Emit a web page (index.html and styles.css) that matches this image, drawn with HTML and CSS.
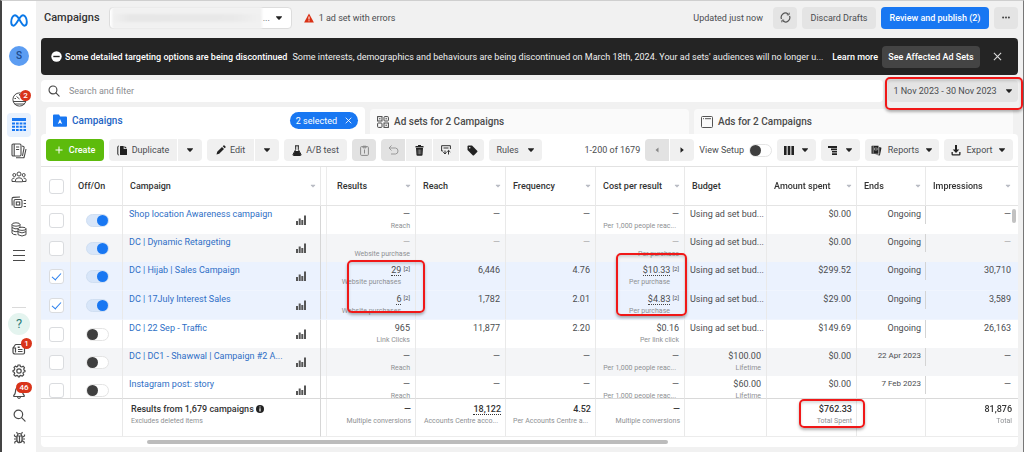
FILE: index.html
```html
<!DOCTYPE html>
<html lang="en">
<head>
<meta charset="utf-8">
<title>Campaigns</title>
<link rel="stylesheet" href="styles.css">
</head>
<body>
<svg class="sprite" aria-hidden="true">
  <symbol id="caret" viewBox="-.7 -.7 9.400 9.400"><path d="M.8 2h6.400q.6.200.2.700L4.500 6q-.5.400-1 0L.6 2.700Q.2 2.200.8 2z" fill="currentColor"/></symbol>
  <symbol id="chart" viewBox="0 0 10 10"><path d="M0 6h2v4H0zM2.700 3.500h2V10h-2zM5.300 5h2v5h-2zM8 .5h2V10H8z" fill="currentColor"/></symbol>
  <symbol id="search" viewBox="0 0 14 14"><g fill="none" stroke="currentColor" stroke-width="1.300" stroke-linecap="round"><circle cx="5.800" cy="5.800" r="4.600"/><path d="M9.300 9.300l3.700 3.700"/></g></symbol>
  <symbol id="close" viewBox="0 0 10 10"><path d="M1 1l8 8M9 1L1 9" stroke="currentColor" stroke-width="1.200" fill="none"/></symbol>
</svg>
<div class="app">
  <nav class="rail" aria-label="Main">
    <a href="#" class="rail-item logo" aria-label="Home"><svg width="18" height="13" viewBox="0 0 18 13"><path d="M9 4.800C7.600 2.600 6.400 1.200 4.900 1.200 2.700 1.200 1.200 4.800 1.200 8.100c0 2.200.9 3.600 2.400 3.600C5.200 11.700 6.400 9.500 9 5c1.600-2.600 2.700-3.800 4.100-3.800 2.200 0 3.700 3.600 3.700 6.900 0 2.200-.9 3.600-2.400 3.600-1.600 0-2.700-1.700-5.400-6.900z" fill="none" stroke="#0a78e8" stroke-width="1.900" stroke-linejoin="round"/></svg></a>
    <a href="#" class="avatar" aria-label="Account">S</a>
    <a href="#" class="rail-item" aria-label="Overview"><svg width="15" height="15" viewBox="0 0 15 15" fill="none" stroke="currentColor"><circle cx="7.500" cy="7.500" r="6.600"/><path d="M1 9.500h13M2.500 12h10" stroke-width="1"/><path d="M7.500 7l-3-2.500M7.500 2v1.500M2.500 6.500H4"/></svg><span class="badge">2</span></a>
    <a href="#" class="rail-item active" aria-label="Campaigns"><svg width="16" height="14" viewBox="0 0 16 14" fill="#1877f2"><path d="M1 0h14v3H1zM1 4.500h3v2H1zM5 4.500h2.700v2H5zM8.700 4.500h2.700v2H8.700zM12.400 4.500H15v2h-2.600zM1 7.700h3v2H1zM5 7.700h2.700v2H5zM8.700 7.700h2.700v2H8.700zM12.400 7.700H15v2h-2.600zM1 11h3v2H1zM5 11h2.700v2H5zM8.700 11h2.700v2H8.700zM12.400 11H15v2h-2.600z"/></svg></a>
    <a href="#" class="rail-item" aria-label="Reports"><svg width="16" height="16" viewBox="0 0 16 16" fill="none" stroke="currentColor" stroke-width="1.100"><rect x="1" y="1" width="9" height="12" rx="1.200"/><path d="M3.200 1v12M5 4h3.200M5 6.500h3.200M11 3l1.500.4q.8.3.6 1.200L11.500 13M5 14.800h7.200q.8 0 1-.8L15 6"/></svg></a>
    <a href="#" class="rail-item" aria-label="Audiences"><svg width="16" height="12" viewBox="0 0 16 12" fill="none" stroke="currentColor"><circle cx="8" cy="3" r="2"/><circle cx="3.300" cy="4" r="1.500"/><circle cx="12.700" cy="4" r="1.500"/><path d="M4.500 10.800V9q.3-2.200 3.500-2.200T11.500 9v1.800zM4.300 10.500H1V8.500Q1.300 7 3.500 7M11.700 10.500H15V8.500Q14.700 7 12.500 7"/></svg></a>
    <a href="#" class="rail-item" aria-label="Ad settings"><svg width="16" height="14" viewBox="0 0 16 14" fill="none" stroke="currentColor" stroke-width="1.100"><rect x="3" y="3.500" width="8" height="8" rx="1.500"/><rect x="5.300" y="6" width="3.400" height="3"/><path d="M1.200 9.500L1 3q0-1.500 1.500-1.600L9 1M12.700 4.500H15M12.700 7.500H15M12.700 10.500H15"/></svg></a>
    <a href="#" class="rail-item" aria-label="Billing"><svg width="16" height="15" viewBox="0 0 16 15" fill="none" stroke="currentColor"><ellipse cx="5" cy="2.500" rx="4" ry="1.700"/><path d="M1 2.500v8.700q1 1.600 4.500 1.600M9 2.500V5M1 5.500q3 2 6 1.200M1 8.400q3 2 6 1.200"/><ellipse cx="11" cy="6.800" rx="4" ry="1.600"/><path d="M7 6.800v5.900q4 2.600 8 0V6.800M7 9.700q4 2.400 8 0"/></svg></a>
    <a href="#" class="rail-item" aria-label="All tools"><svg width="12" height="11" viewBox="0 0 12 11" stroke="currentColor"><path d="M0 .5h12M0 5.500h12M0 10.500h12"/></svg></a>
    <div class="rail-bottom">
      <a href="#" class="help" aria-label="Help">?</a>
      <a href="#" class="rail-item small" aria-label="News"><svg width="14" height="12" viewBox="0 0 14 12" fill="none" stroke="currentColor" stroke-width="1.200"><path d="M3.500 1.500h9v8.300q0 1.200-1.300 1.200H3.200Q1 11 1 9V5h2.500v4.500M1 5l2.500-3.500M6 8.500h4.500M6 6.500h4.500"/><path d="M5.700 3.500h2v1.500h-2z" fill="currentColor" stroke="none"/></svg><span class="badge">1</span></a>
      <a href="#" class="rail-item small" aria-label="Settings"><svg width="14" height="14" viewBox="0 0 14 14" fill="none" stroke="currentColor" stroke-width="1.200"><circle cx="7" cy="7" r="2.200"/><path d="M6 1h2l.4 1.500 1.300.5 1.400-.8 1.400 1.400-.8 1.400.5 1.300L13 6.500v1.200l-1.600.5-.4 1.200.7 1.400-1.400 1.400-1.400-.8-1.200.5L7.500 13h-1l-.5-1.100-1.300-.5-1.400.8-1.400-1.400.8-1.400-.5-1.200L1 7.700V6.500l1.300-.4.500-1.300L2 3.500l1.400-1.400 1.300.8 1-.5z" stroke-linejoin="round"/></svg></a>
      <a href="#" class="rail-item small" aria-label="Notifications"><svg width="14" height="14" viewBox="0 0 14 14" fill="none" stroke="currentColor" stroke-width="1.200"><path d="M7 1.200Q3.500 1.500 3.500 5.500q0 2-1.700 4-.4 1 .6 1h9.200q1 0 .6-1-1.700-2-1.700-4Q10.500 1.500 7 1.200zM5.500 11q1.500 3 3 0"/></svg><span class="badge wide">46</span></a>
      <a href="#" class="rail-item small" aria-label="Search"><svg width="13" height="13"><use href="#search"/></svg></a>
      <a href="#" class="rail-item small" aria-label="Report a bug"><svg width="13" height="13" viewBox="0 0 13 13" fill="none" stroke="currentColor" stroke-width="1.200"><path d="M4 5h5v4q0 2.700-2.500 2.700T4 9zM4.300 5Q4.500 2.500 6.500 2.500T8.700 5M4.500 2.600L3.500 1.200M8.500 2.600l1-1.400M4 6.500L1.500 5V3.500M9 6.500L11.500 5V3.500M1 8h3M9 8h3M4 9.500L1.800 11v1.500M9 9.500l2.200 1.500v1.500M6.500 5.500v6"/></svg></a>
    </div>
  </nav>

  <main class="main">
    <header class="top">
      <h1>Campaigns</h1>
      <div class="account">
        <select aria-label="Ad account"><option>...</option></select>
        <span class="account-mask"></span>
        <svg class="account-caret" width="8" height="8"><use href="#caret"/></svg>
      </div>
      <span class="warning"><svg width="10" height="10" viewBox="0 0 10 10"><path d="M5 .5L9.900 9.400H.1z" fill="#d93014"/><path d="M5 3.500v3M5 7.300v1" stroke="#fff"/></svg>1 ad set with errors</span>
      <span class="updated">Updated just now</span>
      <button class="btn top-btn icon-btn" aria-label="Refresh"><svg width="11" height="11" viewBox="0 0 11 11" fill="none" stroke="#555" stroke-width="1.200"><path d="M1.500 7A4.300 4.300 0 0 1 8 1.900M9.500 4A4.300 4.300 0 0 1 3 9.100"/><path d="M6.800 2.800l2.200.1.200-2.200M4.200 8.200L2 8.100l-.2 2.200" stroke-width="1"/></svg></button>
      <button class="btn top-btn discard">Discard Drafts</button>
      <button class="btn top-btn publish">Review and publish (2)</button>
      <button class="btn top-btn icon-btn" aria-label="More"><svg width="8" height="3" viewBox="0 0 8 3" fill="#444"><circle cx="1.100" cy="1.500" r="1"/><circle cx="4" cy="1.500" r="1"/><circle cx="6.900" cy="1.500" r="1"/></svg></button>
    </header>

    <section class="notice">
      <svg width="11" height="11" viewBox="0 0 11 11"><circle cx="5.500" cy="5.500" r="5.200" fill="#fff"/><path d="M2.300 5.500h6.400" stroke="#242424" stroke-width="1.400"/></svg>
      <strong>Some detailed targeting options are being discontinued</strong>
      <p>Some interests, demographics and behaviours are being discontinued on March 18th, 2024. Your ad sets' audiences will no longer u...</p>
      <a href="#" class="learn">Learn more</a>
      <button class="affected">See Affected Ad Sets</button>
      <button class="dismiss" aria-label="Close"><svg width="9" height="9"><use href="#close"/></svg></button>
    </section>

    <div class="filter-row">
      <label class="search"><svg width="12" height="12"><use href="#search"/></svg><input type="text" placeholder="Search and filter" aria-label="Search and filter"></label>
      <button class="date">1 Nov 2023 - 30 Nov 2023<svg width="8" height="8"><use href="#caret"/></svg></button>
    </div>

    <div class="tabs">
      <a href="#" class="tab current"><svg width="14" height="13" viewBox="0 0 14 13"><path d="M1 .5h5l1.200 2H13q1 0 1 1V12q0 .8-1 .8H1q-1 0-1-.8V1.500Q0 .5 1 .5z" fill="#1877f2"/><path d="M7 5l2.200 5-2.200-1-2.200 1z" fill="#fff"/></svg>Campaigns<span class="pill">2 selected<svg width="7" height="7"><use href="#close"/></svg></span></a>
      <a href="#" class="tab"><svg width="12" height="12" viewBox="0 0 12 12" fill="none" stroke="#444"><rect x=".6" y=".6" width="4.400" height="4.400"/><rect x="7" y=".6" width="4.400" height="4.400" rx=".8"/><rect x=".6" y="7" width="4.400" height="4.400" rx=".8"/><rect x="7" y="7" width="4.400" height="4.400"/><path d="M2 2.800h1.600M8.400 9.200H10M8.400 2.800H10"/></svg>Ad sets for 2 Campaigns</a>
      <a href="#" class="tab"><svg width="12" height="12" viewBox="0 0 12 12" fill="none" stroke="#555"><rect x=".5" y=".5" width="11" height="11" rx="1"/><path d="M2 2.700h1M4 2.700h6"/></svg>Ads for 2 Campaigns</a>
    </div>

    <section class="panel">
      <div class="toolbar">
        <button class="btn create"><svg width="8" height="8" viewBox="0 0 8 8" stroke="#fff"><path d="M4 .5v7M.5 4h7"/></svg>Create</button>
        <div class="group">
          <button class="btn w-lg"><svg width="11" height="11" viewBox="0 0 11 11"><path d="M3.500 1h3.200v3H10v5.500q0 .5-.5.5h-6q-.5 0-.5-.5v-8q0-.5.5-.5zM7.500.9L10 3.300H7.500z" fill="#222"/><path d="M1.700 1Q.8 1 .8 2v7q0 1 .9 1" fill="none" stroke="#222"/></svg>Duplicate</button>
          <button class="btn w-sm" aria-label="Duplicate options"><svg width="8" height="8"><use href="#caret"/></svg></button>
        </div>
        <div class="group">
          <button class="btn w-md"><svg width="10" height="10" viewBox="0 0 10 10" fill="#222"><path d="M.5 9.500l.7-2.700L6 2l2 2-4.800 4.800zM6.700 1.300l.8-.8q.5-.4 1 0l1 1q.4.500 0 1l-.8.8z"/></svg>Edit</button>
          <button class="btn w-sm" aria-label="Edit options"><svg width="8" height="8"><use href="#caret"/></svg></button>
        </div>
        <button class="btn w-ab"><svg width="10" height="11" viewBox="0 0 10 11"><path d="M3 .8h4M3.700 1v3.500L1 9.500q-.3 1 .7 1h6.600q1 0 .7-1L6.300 4.500V1" fill="none" stroke="#222"/><path d="M3 6h4l2 4H1z" fill="#222"/></svg>A/B test</button>
        <button class="btn w-sm off" aria-label="Paste"><svg width="9" height="11" viewBox="0 0 9 11" fill="none" stroke="#8a8a8a"><rect x=".6" y="1.600" width="7.800" height="8.800" rx="1"/><path d="M3 1.200h3v1.600H3zM4.500 4.500v4"/></svg></button>
        <div class="group">
          <button class="btn w-sm off" aria-label="Undo"><svg width="11" height="10" viewBox="0 0 11 10" fill="none" stroke="#999"><path d="M3.500.5L1 3l2.500 2.500M1 3h6.500q2.500.3 2.500 3T7.500 9H3"/></svg></button>
          <button class="btn w-md-icon" aria-label="Delete"><svg width="9" height="11" viewBox="0 0 9 11" fill="#222"><path d="M3 0h3v1h2.500v1.500H.5V1H3zM1 3h7l-.5 7q-.1.800-1 .8h-4q-.9 0-1-.8z"/><path d="M3.200 4.500v4.800M4.500 4.500v4.800M5.800 4.500v4.800" stroke="#aaa" stroke-width=".6"/></svg></button>
          <button class="btn w-md-icon" aria-label="Swap"><svg width="10" height="10" viewBox="0 0 10 10" fill="none" stroke="#333"><path d="M2.200 6H.6V.7h8.800V4M2.500 3h5M4 9V5.500M2.300 7.200L4 9l1.500-1.800M7.500 9.500V5.500M6 6.800l1.500-1.500L9.300 7"/></svg></button>
          <button class="btn w-sm" aria-label="Tag"><svg width="11" height="11" viewBox="0 0 11 11"><path d="M.5 1.500q0-1 1-1H5l5.200 5.200q.6.700 0 1.400L7 10.300q-.7.600-1.300 0L.5 5z" fill="#222"/><circle cx="2.700" cy="2.700" r=".8" fill="#f0f0f0"/></svg></button>
        </div>
        <button class="btn w-rules">Rules<svg width="8" height="8"><use href="#caret"/></svg></button>
        <span class="range">1-200 of 1679</span>
        <div class="group">
          <button class="btn w-sm off" aria-label="Previous page"><svg width="6" height="6" viewBox="0 0 6 6"><path d="M4.500 .5v5L1.500 3z" fill="#888"/></svg></button>
          <button class="btn w-sm" aria-label="Next page"><svg width="6" height="6" viewBox="0 0 6 6"><path d="M1.500 .3v5.400L4.800 3z" fill="#222"/></svg></button>
        </div>
        <label class="setup">View Setup<input type="checkbox" class="toggle"></label>
        <button class="btn w-view" aria-label="Columns"><svg width="10" height="9" viewBox="0 0 10 9" fill="#222"><path d="M0 0h2.600v9H0zM3.700 0h2.600v9H3.700zM7.400 0H10v9H7.400z"/></svg><svg width="8" height="8"><use href="#caret"/></svg></button>
        <button class="btn w-view" aria-label="Breakdown"><svg width="10" height="9" viewBox="0 0 10 9" fill="#222"><path d="M0 0h9v2H0zM3 2.600h6v1.600H3zM4 4.900h5v1.600H4zM4 7.200h5V9H4z"/></svg><svg width="8" height="8"><use href="#caret"/></svg></button>
        <button class="btn w-rep"><svg width="11" height="11" viewBox="0 0 11 11"><path d="M1 .7h6.500v8H1q-.5 0-.5-.5v-7q0-.5.5-.5zM8.200 2l1.800.5q.5.200.4.700L9 10q-.1.500-.7.400L4 9.400h4.200z" fill="#222"/><path d="M2.200 1v7.500M3.500 3h2.700v2H3.500z" stroke="#ccc" stroke-width=".6" fill="none"/></svg>Reports<svg width="8" height="8"><use href="#caret"/></svg></button>
        <button class="btn w-exp"><svg width="10" height="11" viewBox="0 0 10 11" fill="#222"><path d="M4 0h2v4.500h2.300L5 8 1.700 4.500H4zM.5 7v2.200q0 1.300 1.300 1.300h6.400q1.300 0 1.300-1.300V7l-1.300 0v2.200H1.800V7z"/></svg>Export<svg width="8" height="8"><use href="#caret"/></svg></button>
      </div>

      <div class="table-wrap">
        <table>
          <colgroup><col class="c-check"><col class="c-toggle"><col><col class="c-results"><col class="c-num"><col class="c-num"><col class="c-cost"><col class="c-budget"><col class="c-num"><col class="c-ends"><col class="c-last"></colgroup>
          <thead><tr>
            <th class="pick"><input type="checkbox" class="box" aria-label="Select all"></th>
            <th>Off/On</th>
            <th class="name"><div class="head">Campaign<svg width="6" height="6"><use href="#caret"/></svg></div></th>
            <th class="results"><div class="head">Results<svg width="6" height="6"><use href="#caret"/></svg></div></th>
            <th><div class="head">Reach<svg width="6" height="6"><use href="#caret"/></svg></div></th>
            <th><div class="head">Frequency<svg width="6" height="6"><use href="#caret"/></svg></div></th>
            <th><div class="head">Cost per result<svg width="6" height="6"><use href="#caret"/></svg></div></th>
            <th>Budget</th>
            <th><div class="head">Amount spent<svg width="6" height="6"><use href="#caret"/></svg></div></th>
            <th><div class="head">Ends<svg width="6" height="6"><use href="#caret"/></svg></div></th>
            <th><div class="head">Impressions<svg width="6" height="6"><use href="#caret"/></svg></div></th>
          </tr></thead>
          <tbody>
            <tr>
              <td class="pick"><input type="checkbox" class="box" aria-label="Select Shop location Awareness campaign"></td>
              <td class="switch"><input type="checkbox" class="toggle" checked aria-label="On"></td>
              <td class="name"><div class="cell-name"><a href="#">Shop location Awareness campaign</a><svg width="10" height="10"><use href="#chart"/></svg></div></td>
              <td class="results">—<small>Reach</small></td><td>—</td><td>—</td><td>—<small class="cut">Per 1,000 people reac...</small></td>
              <td class="left">Using ad set bud...</td><td>$0.00</td><td class="ends">Ongoing</td><td>—</td>
            </tr>
            <tr class="alt faint">
              <td class="pick"><input type="checkbox" class="box" aria-label="Select DC | Dynamic Retargeting"></td>
              <td class="switch"><input type="checkbox" class="toggle" checked aria-label="On"></td>
              <td class="name"><div class="cell-name"><a href="#">DC | Dynamic Retargeting</a><svg width="10" height="10"><use href="#chart"/></svg></div></td>
              <td class="results"><i>—</i><small>Website purchase</small></td><td><i>—</i></td><td><i>—</i></td><td><i>—</i><small>Per purchase</small></td>
              <td class="left">Using ad set bud...</td><td>$0.00</td><td class="ends">Ongoing</td><td><i>—</i></td>
            </tr>
            <tr class="sel">
              <td class="pick"><input type="checkbox" class="box" checked aria-label="Select DC | Hijab | Sales Campaign"></td>
              <td class="switch"><input type="checkbox" class="toggle" checked aria-label="On"></td>
              <td class="name"><div class="cell-name"><a href="#">DC | Hijab | Sales Campaign</a><svg width="10" height="10"><use href="#chart"/></svg></div></td>
              <td class="results"><u>29</u><sup>[2]</sup><small class="inset">Website purchases</small></td><td>6,446</td><td>4.76</td><td><u>$10.33</u><sup>[2]</sup><small class="inset">Per purchase</small></td>
              <td class="left">Using ad set bud...</td><td>$299.52</td><td class="ends">Ongoing</td><td>30,710</td>
            </tr>
            <tr class="sel">
              <td class="pick"><input type="checkbox" class="box" checked aria-label="Select DC | 17July Interest Sales"></td>
              <td class="switch"><input type="checkbox" class="toggle" checked aria-label="On"></td>
              <td class="name"><div class="cell-name"><a href="#">DC | 17July Interest Sales</a><svg width="10" height="10"><use href="#chart"/></svg></div></td>
              <td class="results"><u>6</u><sup>[2]</sup><small class="inset">Website purchases</small></td><td>1,782</td><td>2.01</td><td><u>$4.83</u><sup>[2]</sup><small class="inset">Per purchase</small></td>
              <td class="left">Using ad set bud...</td><td>$29.00</td><td class="ends">Ongoing</td><td>3,589</td>
            </tr>
            <tr>
              <td class="pick"><input type="checkbox" class="box" aria-label="Select DC | 22 Sep - Traffic"></td>
              <td class="switch"><input type="checkbox" class="toggle" aria-label="Off"></td>
              <td class="name"><div class="cell-name"><a href="#">DC | 22 Sep - Traffic</a><svg width="10" height="10"><use href="#chart"/></svg></div></td>
              <td class="results">965<small>Link Clicks</small></td><td>11,877</td><td>2.20</td><td>$0.16<small>Per link click</small></td>
              <td class="left">Using ad set bud...</td><td>$149.69</td><td class="ends">Ongoing</td><td>26,163</td>
            </tr>
            <tr class="alt">
              <td class="pick"><input type="checkbox" class="box" aria-label="Select DC | DC1 - Shawwal"></td>
              <td class="switch"><input type="checkbox" class="toggle" aria-label="Off"></td>
              <td class="name"><div class="cell-name"><a href="#">DC | DC1 - Shawwal | Campaign #2 A...</a><svg width="10" height="10"><use href="#chart"/></svg></div></td>
              <td class="results">—<small>Reach</small></td><td>—</td><td>—</td><td>—<small class="cut">Per 1,000 people reac...</small></td>
              <td>$100.00<small>Lifetime</small></td><td>$0.00</td><td class="ends day">22 Apr 2023</td><td>—</td>
            </tr>
            <tr>
              <td class="pick"><input type="checkbox" class="box" aria-label="Select Instagram post: story"></td>
              <td class="switch"><input type="checkbox" class="toggle" aria-label="Off"></td>
              <td class="name"><div class="cell-name"><a href="#">Instagram post: story</a><svg width="10" height="10"><use href="#chart"/></svg></div></td>
              <td class="results">—<small>Reach</small></td><td>—</td><td>—</td><td>—<small class="cut">Per 1,000 people reac...</small></td>
              <td>$60.00<small>Lifetime</small></td><td>$0.00</td><td class="ends day">7 Feb 2023</td><td>—</td>
            </tr>
          </tbody>
          <tfoot><tr>
            <td colspan="2"></td>
            <td class="name total"><b>Results from 1,679 campaigns <svg width="8" height="8" viewBox="0 0 8 8"><circle cx="4" cy="4" r="4" fill="#222"/><path d="M4 1.400v1.200M4 3.300v3.300" stroke="#fff" stroke-width="1.200"/></svg></b><small>Excludes deleted items</small></td>
            <td class="results"><b>—</b><small>Multiple conversions</small></td>
            <td><b class="dotted">18,122</b><small class="cut">Accounts Centre acco...</small></td>
            <td><b>4.52</b><small class="cut">Per Accounts Centre a...</small></td>
            <td><b>—</b><small>Multiple conversions</small></td>
            <td></td>
            <td><b>$762.33</b><small>Total Spent</small></td>
            <td></td>
            <td><b>81,876</b><small>Total</small></td>
          </tr></tfoot>
        </table>
        <span class="vbar"></span>
      </div>
      <div class="hbar"><span></span></div>
    </section>
  </main>
  <span class="mark mark-date"></span>
  <span class="mark mark-results"></span>
  <span class="mark mark-cost"></span>
  <span class="mark mark-spent"></span>
</div>
</body>
</html>
```
FILE: styles.css
```css
* { box-sizing: border-box; }
body { margin: 0; font-family: Roboto, "Liberation Sans", sans-serif; font-size: 9px; line-height: 12px; color: #4b4d50; background: #f1f1f1; }
a { color: inherit; text-decoration: none; }
button, input, select { font: inherit; color: inherit; margin: 0; }
button { border: 0; padding: 0; cursor: pointer; white-space: nowrap; display: flex; align-items: center; justify-content: center; }
svg { flex: none; display: block; }
.sprite { position: absolute; width: 0; height: 0; }

.app { position: relative; display: flex; height: 100vh; min-height: 452px; border: solid #cfcfcf; border-width: 1px 1px 0 2px; border-left-color: #444; border-right-color: #777; }

/* left rail */
.rail { width: 34px; flex: none; background: #fff; display: flex; flex-direction: column; align-items: center; padding: 6px 0 4px; color: #4a4a4a; }
.rail-item { position: relative; width: 24px; height: 26px; display: flex; align-items: center; justify-content: center; flex: none; }
.rail-item.small { height: 22px; }
.rail-item.active { background: #e7f1fe; border-radius: 4px; height: 24px; margin: 1px 0; }
.avatar { width: 20px; height: 20px; margin: 13px 0 20px; border-radius: 50%; background: #5c9df2; color: #1d4a8c; font-size: 10px; font-weight: 500; display: flex; align-items: center; justify-content: center; flex: none; }
.badge { position: absolute; top: 4px; right: 0; min-width: 11px; height: 11px; border-radius: 6px; background: #d9341a; color: #fff; font-size: 8px; font-weight: 500; line-height: 11px; text-align: center; }
.small .badge { top: 0; right: -1px; }
.small .badge.wide { width: 16px; }
.rail-bottom { margin-top: auto; display: flex; flex-direction: column; align-items: center; }
.rail-bottom::before { content: ""; width: 14px; height: 1px; background: #dadada; margin-bottom: 5px; }
.help { width: 22px; height: 22px; margin-bottom: 3px; border-radius: 50%; background: #e4f4ef; color: #2f7d78; font-size: 13px; display: flex; align-items: center; justify-content: center; }

.main { flex: 1; min-width: 0; display: flex; flex-direction: column; padding: 5px 5px 5px 5px; }

/* header */
.top { display: flex; align-items: center; height: 23px; margin-bottom: 9px; gap: 5px; }
.top h1 { margin: 0 4px 0 3px; font-size: 11px; font-weight: 500; color: #333; }
.account { position: relative; width: 183px; height: 22px; margin-right: 7px; }
.account select { width: 100%; height: 100%; appearance: none; border: 1px solid #ddd; border-radius: 4px; background: #fff; padding: 0 20px 0 153px; }
.account-mask { position: absolute; inset: 0 30px 0 3px; background: linear-gradient(90deg, #f1f1f1 0, #e7e7e7 12%, #e9e9e9 80%, #f1f1f1) center / 100% 8px no-repeat #f1f1f1; filter: blur(1px); }
.account-caret { position: absolute; right: 9px; top: 7px; color: #222; }
.warning { display: flex; align-items: center; gap: 5px; }
.updated { margin-left: auto; margin-right: 5px; }
.btn { height: 22px; background: #f0f0f0; border-radius: 4px; gap: 4px; color: #4b4d50; }
.btn use { color: #222; }
.top-btn { background: #e4e4e4; }
.icon-btn { width: 24px; }
.discard { width: 74px; }
.publish { width: 108px; background: #1877f2; color: #fff; font-weight: 500; }

/* notice */
.notice { display: flex; align-items: center; height: 37px; flex: none; padding: 0 16px 0 10px; border-radius: 4px; background: #242424; color: #fff; margin-bottom: 5px; }
.notice strong { font-weight: 500; margin: 0 5px 0 3px; white-space: nowrap; }
.notice p { margin: 0; flex: 1; min-width: 0; white-space: nowrap; overflow: hidden; text-overflow: ellipsis; color: #eee; }
.learn { font-weight: 500; margin: 0 4px; white-space: nowrap; }
.affected { width: 98px; height: 22px; background: #444; color: #fff; border-radius: 4px; font-weight: 500; }
.dismiss { margin-left: 13px; background: none; color: #ddd; }

/* filter */
.filter-row { display: flex; gap: 5px; height: 22px; flex: none; margin-bottom: 5px; }
.search { flex: 1; display: flex; align-items: center; gap: 9px; padding-left: 7px; background: #fff; border-radius: 4px; color: #444; }
.search input { border: 0; outline: 0; flex: 1; background: none; padding: 0; }
.search input::placeholder { color: #8b8d91; }
.date { width: 130px; gap: 8px; background: #e4e4e4; border-radius: 4px; }
.date svg { color: #222; }

/* tabs */
.tabs { display: grid; grid-template-columns: repeat(3, 1fr); gap: 5px; padding: 0 5px; height: 27px; flex: none; align-items: end; }
.tab { display: flex; align-items: center; gap: 5px; height: 25px; padding: 0 7px; border-radius: 4px 4px 0 0; background: #fafafa; font-size: 10px; font-weight: 500; color: #4a4a4a; white-space: nowrap; }
.tab.current { height: 27px; background: #fff; color: #2464c4; }
.pill { margin-left: auto; height: 17px; border-radius: 9px; background: #1877f2; color: #fff; font-size: 9px; font-weight: 400; display: flex; align-items: center; gap: 8px; padding: 0 6px; }

/* panel */
.panel { flex: 1; min-height: 0; background: #fff; border-radius: 4px; display: flex; flex-direction: column; }
.toolbar { display: flex; align-items: center; gap: 5px; height: 32px; flex: none; padding: 0 5px; }
.toolbar .btn { flex: none; }
.group { display: flex; gap: 1px; }
.group .btn { border-radius: 0; }
.group .btn:first-child { border-radius: 4px 0 0 4px; }
.group .btn:last-child { border-radius: 0 4px 4px 0; }
.toolbar .create { width: 58px; background: #5dbb0c; color: #fff; font-weight: 500; gap: 6px; }
.w-lg { width: 68px; }
.w-md { width: 47px; }
.w-sm { width: 24px; }
.w-md-icon { width: 26px; }
.w-ab { width: 63px; }
.toolbar .w-rules { width: 53px; gap: 8px; }
.toolbar .w-view { width: 39px; gap: 7px; }
.toolbar .w-rep { width: 74px; gap: 6px; }
.toolbar .w-exp { width: 69px; gap: 6px; }
.toolbar .off { background: #e2e2e2; }
.range { margin-left: auto; white-space: nowrap; }
.setup { display: flex; align-items: center; gap: 5px; white-space: nowrap; }

.toggle { appearance: none; display: block; width: 23px; height: 13px; border: 1px solid #e4e4e4; border-radius: 7px; background: #fff; }
.toggle::before { content: ""; display: block; width: 11px; height: 11px; border-radius: 50%; background: #3f3f3f; }
.toggle:checked { background: #d8e6f9; border-color: #d0dff2; }
.toggle:checked::before { background: #1877f2; margin-left: 10px; }
.box { appearance: none; display: block; width: 15px; height: 15px; border: 1px solid #dadcdf; border-radius: 3px; background: #fff; }
.box:checked::before { content: ""; display: block; width: 8px; height: 4px; margin: 3px 0 0 2px; border: solid #2b80ee; border-width: 0 0 1px 1px; transform: rotate(-48deg); }

/* table */
.table-wrap { position: relative; flex: 1; min-height: 0; overflow: hidden; border-top: 1px solid #e2e2e2; }
table { width: 100%; table-layout: fixed; border-collapse: separate; border-spacing: 0; }
.c-check { width: 30px; }
.c-toggle { width: 52px; }
.c-results { width: 95px; }
.c-num { width: 90px; }
.c-cost { width: 89px; }
.c-budget { width: 82px; }
.c-ends { width: 69px; }
.c-last { width: 92px; }
th, td { padding: 0; border-right: 1px solid #e9e9e9; white-space: nowrap; overflow: hidden; }
th:last-child, td:last-child { border-right: 0; }
thead { position: sticky; top: 0; z-index: 1; background: #fff; }
th { height: 39px; padding: 0 4px 0 7px; border-bottom: 1px solid #e4e4e4; font-weight: 500; text-align: left; color: #333; }
th:last-child { padding-right: 7px; }
.head { display: flex; align-items: center; justify-content: space-between; }
.head svg { color: #b9bcc4; }
.pick, th.pick { padding: 0 0 0 8px; vertical-align: middle; }
td { height: 28px; padding: 2px 5px 0; vertical-align: top; text-align: right; }
td.pick { text-align: left; padding-top: 0; }
td:last-child { padding-right: 7px; }
.alt { background: #f4f5f7; }
.sel { background: #ebf2fe; }
.sel td { height: 29px; border-bottom: 1px solid #f0f5fe; }
.faint i { color: #aaa; }
i { font-style: normal; }
td.switch { padding: 0 0 0 15px; vertical-align: middle; }
td.name { text-align: left; padding-left: 6px; border-right-color: #d6d6d6; }
td.left { text-align: left; }
.cell-name { display: flex; justify-content: space-between; padding-right: 9px; }
.cell-name a { color: #2f6fc6; }
.cell-name svg { color: #555; margin-top: 7px; }
.results { background: linear-gradient(#ececec, #ececec) 5px 0 / 1px 100% no-repeat; }
th.results { padding-left: 16px; }
small { display: block; font-size: 7px; line-height: 12px; color: #8e9093; }
.inset { padding-right: 9px; }
.cut { padding-right: 3px; }
sup { font-size: 6px; line-height: 6px; margin-left: 2px; vertical-align: 2px; }
u { text-decoration: none; border-bottom: 1px dotted #444; }
.dotted { border-bottom: 1px dotted #333; }
.ends { border-right: 0; background: linear-gradient(#d4d4d4, #d4d4d4) right 0 top 0 / 1px 18px no-repeat; }
.day { font-size: 8px; }
tfoot { position: sticky; bottom: 0; z-index: 1; background: #fff; }
tfoot td { height: 39px; border-top: 1px solid #d9d9d9; border-bottom: 1px solid #ececec; padding: 4px 4px 0 6px; }
tfoot td:last-child { padding-right: 6px; }
tfoot td.total { padding-left: 8px; }
tfoot b { font-weight: 500; color: #333; }
tfoot b svg { display: inline-block; vertical-align: -1px; }
.vbar { position: absolute; z-index: 1; right: 2px; top: 42px; width: 4px; height: 14px; border-radius: 2px; background: #c2c2c2; }
.hbar { flex: none; height: 10px; padding: 3px 350px 0 106px; }
.hbar span { display: block; height: 4px; border-radius: 2px; background: #bcbcbc; }

/* highlight frames drawn over the page */
.mark { position: absolute; z-index: 2; border: 2px solid #f01818; border-radius: 5px; box-shadow: 0 2px 3px rgba(0, 0, 0, .3), inset 0 2px 3px rgba(0, 0, 0, .15); pointer-events: none; }
.mark-date { right: 0; top: 76px; width: 138px; height: 33px; }
.mark-results { right: 598px; top: 259px; width: 78px; height: 53px; }
.mark-cost { right: 336px; top: 252px; width: 71px; height: 63px; }
.mark-spent { right: 158px; top: 398px; width: 66px; height: 29px; }
```
